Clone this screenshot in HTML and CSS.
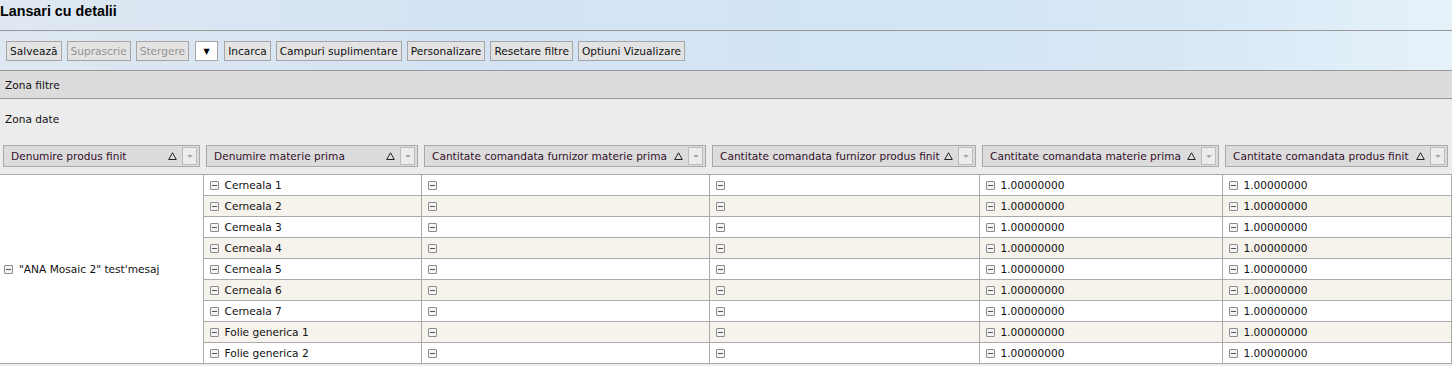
FILE: index.html
```html
<!DOCTYPE html>
<html lang="ro">
<head>
  <meta charset="UTF-8" />
  <meta name="viewport" content="width=device-width, initial-scale=1.0"/>
  <title>Lansari cu detalii</title>
  <link rel="stylesheet" href="styles.css">
</head>
<body>

<div class="title-bar">
  <h1>Lansari cu detalii</h1>
</div>

<div class="toolbar">
  <button>Salvează</button>
  <button disabled>Suprascrie</button>
  <button disabled>Stergere</button>
  <span class="select-box">&#9660;</span>
  <button>Incarca</button>
  <button>Campuri suplimentare</button>
  <button>Personalizare</button>
  <button>Resetare filtre</button>
  <button>Optiuni Vizualizare</button>
</div>

<div class="zone-filters">Zona filtre</div>

<div class="zone-data">
  <div class="zone-label">Zona date</div>

  <table class="grid">
    <colgroup>
      <col class="c1">
      <col class="c2">
      <col class="c3">
      <col class="c4">
      <col class="c5">
      <col class="c6">
    </colgroup>
    <thead>
      <tr>
        <th><div class="hdr"><span class="hdr-text">Denumire produs finit</span><svg class="sort" viewBox="0 0 9 8"><path d="M4.5 0.8 L8.3 7.5 L0.7 7.5 Z"/></svg><span class="drop"></span></div></th>
        <th><div class="hdr"><span class="hdr-text">Denumire materie prima</span><svg class="sort" viewBox="0 0 9 8"><path d="M4.5 0.8 L8.3 7.5 L0.7 7.5 Z"/></svg><span class="drop"></span></div></th>
        <th><div class="hdr"><span class="hdr-text">Cantitate comandata furnizor materie prima</span><svg class="sort" viewBox="0 0 9 8"><path d="M4.5 0.8 L8.3 7.5 L0.7 7.5 Z"/></svg><span class="drop"></span></div></th>
        <th><div class="hdr"><span class="hdr-text">Cantitate comandata furnizor produs finit</span><svg class="sort" viewBox="0 0 9 8"><path d="M4.5 0.8 L8.3 7.5 L0.7 7.5 Z"/></svg><span class="drop"></span></div></th>
        <th><div class="hdr"><span class="hdr-text">Cantitate comandata materie prima</span><svg class="sort" viewBox="0 0 9 8"><path d="M4.5 0.8 L8.3 7.5 L0.7 7.5 Z"/></svg><span class="drop"></span></div></th>
        <th><div class="hdr"><span class="hdr-text">Cantitate comandata produs finit</span><svg class="sort" viewBox="0 0 9 8"><path d="M4.5 0.8 L8.3 7.5 L0.7 7.5 Z"/></svg><span class="drop"></span></div></th>
      </tr>
    </thead>
    <tbody>
      <tr>
        <td class="group" rowspan="9"><span class="minus"></span>"ANA Mosaic 2" test'mesaj</td>
        <td><span class="minus"></span>Cerneala 1</td>
        <td><span class="minus"></span></td>
        <td><span class="minus"></span></td>
        <td><span class="minus"></span>1.00000000</td>
        <td><span class="minus"></span>1.00000000</td>
      </tr>
      <tr class="alt">
        <td><span class="minus"></span>Cerneala 2</td>
        <td><span class="minus"></span></td>
        <td><span class="minus"></span></td>
        <td><span class="minus"></span>1.00000000</td>
        <td><span class="minus"></span>1.00000000</td>
      </tr>
      <tr>
        <td><span class="minus"></span>Cerneala 3</td>
        <td><span class="minus"></span></td>
        <td><span class="minus"></span></td>
        <td><span class="minus"></span>1.00000000</td>
        <td><span class="minus"></span>1.00000000</td>
      </tr>
      <tr class="alt">
        <td><span class="minus"></span>Cerneala 4</td>
        <td><span class="minus"></span></td>
        <td><span class="minus"></span></td>
        <td><span class="minus"></span>1.00000000</td>
        <td><span class="minus"></span>1.00000000</td>
      </tr>
      <tr>
        <td><span class="minus"></span>Cerneala 5</td>
        <td><span class="minus"></span></td>
        <td><span class="minus"></span></td>
        <td><span class="minus"></span>1.00000000</td>
        <td><span class="minus"></span>1.00000000</td>
      </tr>
      <tr class="alt">
        <td><span class="minus"></span>Cerneala 6</td>
        <td><span class="minus"></span></td>
        <td><span class="minus"></span></td>
        <td><span class="minus"></span>1.00000000</td>
        <td><span class="minus"></span>1.00000000</td>
      </tr>
      <tr>
        <td><span class="minus"></span>Cerneala 7</td>
        <td><span class="minus"></span></td>
        <td><span class="minus"></span></td>
        <td><span class="minus"></span>1.00000000</td>
        <td><span class="minus"></span>1.00000000</td>
      </tr>
      <tr class="alt">
        <td><span class="minus"></span>Folie generica 1</td>
        <td><span class="minus"></span></td>
        <td><span class="minus"></span></td>
        <td><span class="minus"></span>1.00000000</td>
        <td><span class="minus"></span>1.00000000</td>
      </tr>
      <tr>
        <td><span class="minus"></span>Folie generica 2</td>
        <td><span class="minus"></span></td>
        <td><span class="minus"></span></td>
        <td><span class="minus"></span>1.00000000</td>
        <td><span class="minus"></span>1.00000000</td>
      </tr>
    </tbody>
  </table>
</div>

</body>
</html>
```

FILE: styles.css
```css
body {
  margin: 0;
  background: #ececec;
  color: #111;
  font-family: "DejaVu Sans", Verdana, sans-serif;
  font-size: 10.6px;
}

.title-bar,
.toolbar {
  background: linear-gradient(90deg, #dfe8f2 0%, #d4e3f3 30%, #d2e5f5 60%, #d7e8f6 82%, #e6f2fa 100%);
}

.title-bar {
  height: 31px;
  box-sizing: border-box;
  border-bottom: 1px solid #999;
}

.title-bar h1 {
  margin: 0;
  padding-top: 3px;
  font-family: "Liberation Sans", Arial, sans-serif;
  font-size: 14.3px;
  line-height: 17px;
  font-weight: bold;
  color: #000;
}

.toolbar {
  display: flex;
  align-items: center;
  gap: 5px;
  height: 40px;
  box-sizing: border-box;
  padding: 10px 6px 9px;
  border-bottom: 1px solid #999;
}

.toolbar button {
  height: 20px;
  padding: 0 3px;
  font-family: inherit;
  font-size: inherit;
  color: #111;
  background: #e3e3e3;
  border: 1px solid #a5a5a5;
  border-radius: 0;
}

.toolbar button:disabled {
  color: #949494;
}

.select-box {
  width: 23px;
  height: 20px;
  margin: 0 1px;
  box-sizing: border-box;
  display: flex;
  align-items: center;
  justify-content: center;
  background: #fff;
  border: 1px solid #a5a5a5;
  font-size: 8px;
  color: #000;
}

.zone-filters {
  height: 28px;
  box-sizing: border-box;
  padding: 1px 5px 0;
  line-height: 27px;
  background: #dcdcdc;
  border-bottom: 1px solid #999;
}

.zone-label {
  height: 42px;
  box-sizing: border-box;
  padding: 7px 5px 0;
  line-height: 27px;
}

.grid {
  table-layout: fixed;
  border-collapse: collapse;
  width: 1451px;
}

.c1 { width: 203px; }
.c2 { width: 218px; }
.c3 { width: 288px; }
.c4 { width: 270px; }
.c5 { width: 243px; }
.c6 { width: 229px; }

.grid th {
  padding: 4px 3px 7px;
  font-weight: normal;
  text-align: left;
}

.hdr {
  display: flex;
  align-items: center;
  height: 22px;
  box-sizing: border-box;
  padding: 0 2px 0 7px;
  background: #dcdcdc;
  border: 1px solid #a9a9a9;
  color: #33112b;
  white-space: nowrap;
}

.hdr-text {
  flex: 1;
  overflow: hidden;
}

.sort {
  width: 9px;
  height: 8px;
  margin-right: 5px;
  fill: none;
  stroke: #222;
  stroke-width: 1;
}

.drop {
  position: relative;
  width: 15px;
  height: 18px;
  box-sizing: border-box;
  background: #ececec;
  border: 1px solid #bcbcbc;
}

.drop::after {
  content: "";
  position: absolute;
  left: 4px;
  top: 7px;
  border-left: 3px solid transparent;
  border-right: 3px solid transparent;
  border-top: 3px solid #a8a8a8;
}

.grid td {
  height: 20px;
  padding: 0 0 0 6px;
  border: 1px solid #aaa;
  background: #fff;
  white-space: nowrap;
  vertical-align: middle;
}

.grid tr.alt td {
  background: #f6f3ec;
}

.grid td.group {
  padding-left: 4px;
  border-left: none;
  background: #fff;
}

.minus {
  position: relative;
  display: inline-block;
  width: 9px;
  height: 9px;
  box-sizing: border-box;
  margin-right: 6px;
  vertical-align: -1px;
  border: 1px solid #8c8c8c;
  border-radius: 1px;
  background: #f4f4f4;
}

.minus::after {
  content: "";
  position: absolute;
  left: 1px;
  top: 3px;
  width: 5px;
  height: 1px;
  background: #555;
}
```
